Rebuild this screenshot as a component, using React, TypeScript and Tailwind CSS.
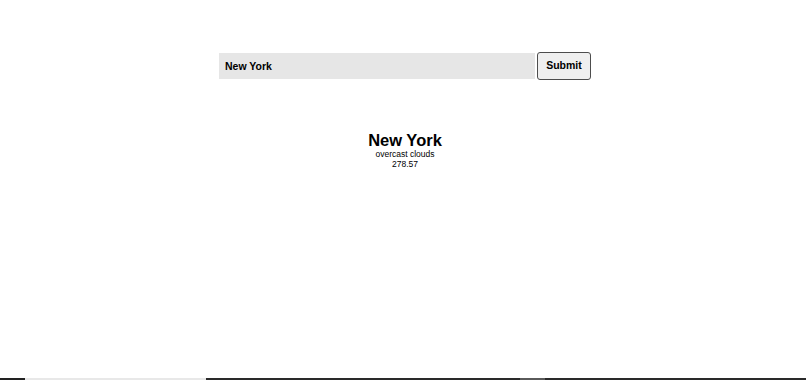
export default function App() {
	return <div className="h-screen flex flex-col bg-white font-['Liberation_Sans',Arial,sans-serif] text-black">
		<div className="flex flex-col items-center pt-[52px] pl-[4px]">
			<form className="flex items-center gap-[2px]" onSubmit={e => e.preventDefault()}>
				<input
					className="w-[316px] h-[26px] bg-[#e6e6e6] px-[6px] text-[10.5px] font-bold outline-none"
					defaultValue="New York"
				/>
				<button className="w-[54px] h-[28px] border border-[#4d4d4d] rounded-[3px] bg-[#efefef] text-[10.5px] font-bold">
					Submit
				</button>
			</form>

			<div className="mt-[50px] flex flex-col items-center">
				<h1 className="text-[16.5px] leading-[20px] font-bold">New York</h1>
				<p className="text-[8.5px] leading-[9.5px]">overcast clouds</p>
				<p className="text-[8.5px] leading-[9.5px]">278.57</p>
			</div>
		</div>

		<div className="mt-auto flex h-[2px]">
			<div className="w-[25px] bg-[#222]"></div>
			<div className="w-[181px] bg-[#e8e8e8]"></div>
			<div className="w-[314px] bg-[#2a2a2a]"></div>
			<div className="w-[25px] bg-[#5a5a5a]"></div>
			<div className="flex-1 bg-[#2a2a2a]"></div>
		</div>
	</div>
}
